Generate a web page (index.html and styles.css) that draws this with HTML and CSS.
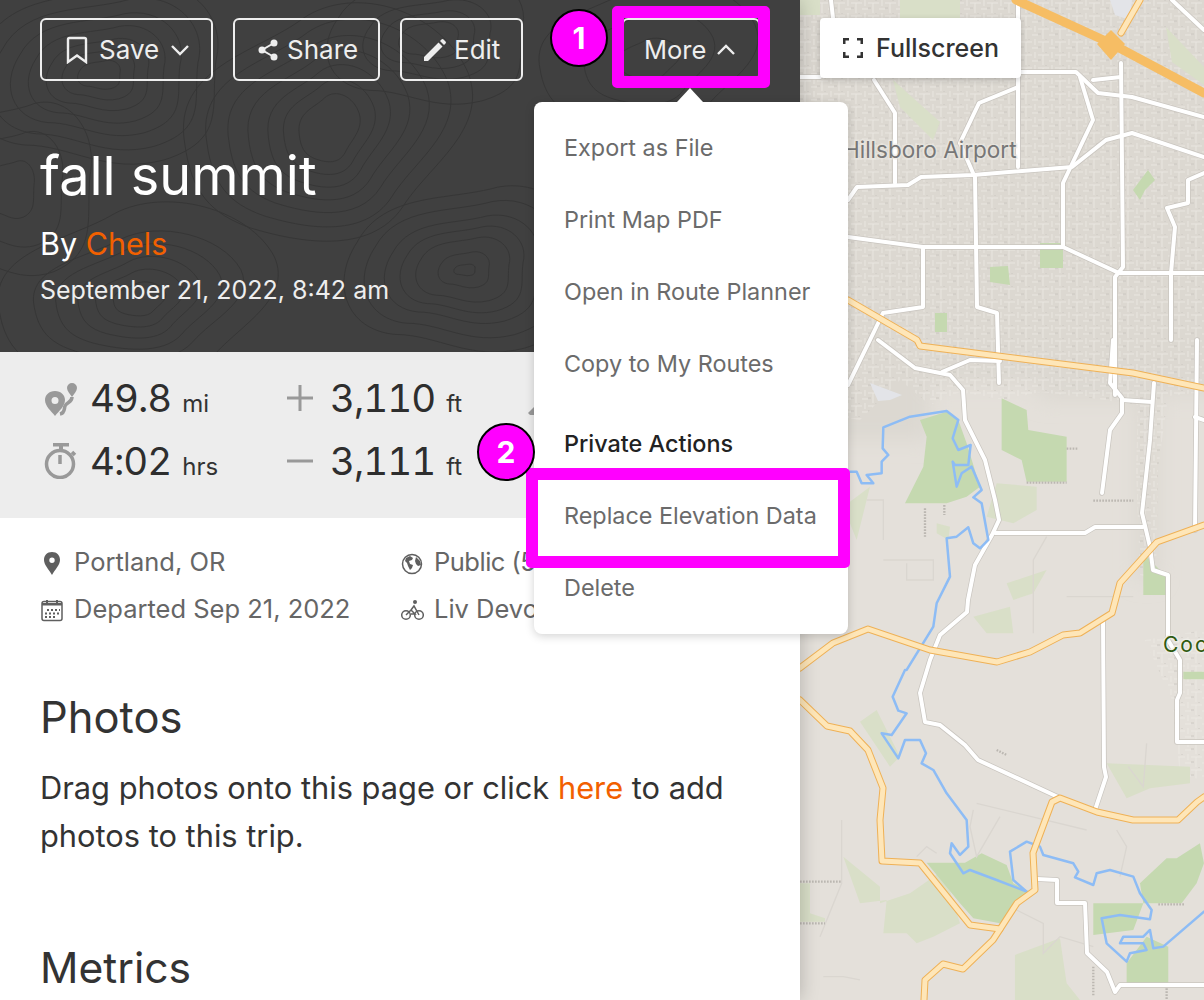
FILE: index.html
```html
<!DOCTYPE html>
<html lang="en">
<head>
<meta charset="utf-8">
<title>fall summit</title>
<link rel="stylesheet" href="styles.css">
</head>
<body>
<div class="page">
  <main class="panel">
    <header class="hero">
      <svg class="topo" viewBox="0 0 800 352" aria-hidden="true">
        <defs>
          <path class="contour" id="blob" d="M-40 -12C-30 -34 -6 -30 12 -36C30 -40 44 -24 40 -6C38 12 44 26 22 34C2 40 -10 28 -26 28C-44 26 -50 6 -40 -12Z"/>
          <path class="contour" id="blob2" d="M-44 4C-48 -18 -22 -22 -8 -32C8 -42 34 -34 42 -16C48 0 30 10 22 22C12 36 -10 32 -24 28C-36 24 -42 18 -44 4Z"/>
        </defs>
        <use href="#blob" transform="translate(100 75) scale(.5 .4)"/>
        <use href="#blob" transform="translate(100 75) scale(.85 .7)"/>
        <use href="#blob" transform="translate(100 75) scale(1.2 1)"/>
        <use href="#blob" transform="translate(100 75) scale(1.6 1.35)"/>
        <use href="#blob" transform="translate(100 75) scale(2 1.7)"/>
        <use href="#blob" transform="translate(100 75) scale(2.45 2.1)"/>
        <use href="#blob" transform="translate(100 75) scale(2.9 2.5)"/>
        <use href="#blob2" transform="translate(330 130) scale(.7 1)"/>
        <use href="#blob2" transform="translate(330 130) scale(1.05 1.4)"/>
        <use href="#blob2" transform="translate(330 130) scale(1.4 1.8)"/>
        <use href="#blob2" transform="translate(330 130) scale(1.85 2.2)"/>
        <use href="#blob2" transform="translate(330 130) scale(2.3 2.6)"/>
        <use href="#blob2" transform="translate(330 130) scale(2.8 3.05)"/>
        <use href="#blob2" transform="translate(330 130) scale(3.3 3.5)"/>
        <use href="#blob" transform="translate(465 270) scale(.25 .16)"/>
        <use href="#blob" transform="translate(465 270) scale(.6 .5)"/>
        <use href="#blob" transform="translate(465 270) scale(1.1 .9)"/>
        <use href="#blob" transform="translate(465 270) scale(1.45 1.2)"/>
        <use href="#blob" transform="translate(465 270) scale(1.8 1.5)"/>
        <use href="#blob" transform="translate(465 270) scale(2.25 1.9)"/>
        <use href="#blob" transform="translate(465 270) scale(2.7 2.3)"/>
        <use href="#blob2" transform="translate(140 300) scale(.6 .5)"/>
        <use href="#blob2" transform="translate(140 300) scale(1 .85)"/>
        <use href="#blob2" transform="translate(140 300) scale(1.4 1.2)"/>
        <use href="#blob2" transform="translate(140 300) scale(1.9 1.55)"/>
        <use href="#blob2" transform="translate(140 300) scale(2.4 1.9)"/>
        <use href="#blob2" transform="translate(140 300) scale(3.2 2.7)"/>
        <use href="#blob" transform="translate(430 40) scale(.7 .5)"/>
        <use href="#blob" transform="translate(430 40) scale(1.1 .8)"/>
        <use href="#blob" transform="translate(430 40) scale(1.5 1.1)"/>
        <use href="#blob" transform="translate(430 40) scale(2.3 1.8)"/>
        <use href="#blob2" transform="translate(650 60) scale(.7 .6)"/>
        <use href="#blob2" transform="translate(650 60) scale(1.5 1.4)"/>
        <use href="#blob2" transform="translate(650 60) scale(2.5 2.2)"/>
        <use href="#blob" transform="translate(10 190) scale(.6 .8)"/>
        <use href="#blob" transform="translate(10 190) scale(1.3 1.6)"/>
        <use href="#blob" transform="translate(10 190) scale(2 2.4)"/>
      </svg>
      <div class="actions">
        <button class="btn btn-save">
          <svg class="ico" width="22" height="28" viewBox="0 0 22 28"><path class="line" d="M2 26V3.500A1.500 1.500 0 0 1 3.500 2h15A1.500 1.500 0 0 1 20 3.500V26l-9-6.500z"/></svg>
          <span>Save</span>
          <svg class="ico" width="20" height="12" viewBox="0 0 20 12"><path class="line" d="M2 2l8 8 8-8"/></svg>
        </button>
        <button class="btn btn-share">
          <svg class="ico" width="20" height="22" viewBox="0 0 20 22"><path class="line thin" d="M16 4L4 11l12 7"/><circle class="solid" cx="16" cy="4" r="3.500"/><circle class="solid" cx="4" cy="11" r="3.500"/><circle class="solid" cx="16" cy="18" r="3.500"/></svg>
          <span>Share</span>
        </button>
        <button class="btn btn-edit">
          <svg class="ico" width="22" height="22" viewBox="0 0 22 22"><path class="solid" d="M0 22v-4L14.500 3.500l4 4L4 22zM16 2l1.500-1.500a1.500 1.500 0 0 1 2 0l2 2a1.500 1.500 0 0 1 0 2L20 6z"/></svg>
          <span>Edit</span>
        </button>
        <button class="btn btn-more">
          <span>More</span>
          <svg class="ico" width="20" height="12" viewBox="0 0 20 12"><path class="line" d="M2 10l8-8 8 8"/></svg>
        </button>
      </div>
      <h1 class="title">fall summit</h1>
      <p class="by">By <a class="link">Chels</a></p>
      <p class="date">September 21, 2022, 8:42 am</p>
    </header>

    <section class="stats">
      <div class="stat">
        <svg class="stat-ico" width="34" height="34" viewBox="0 0 34 34"><path class="gray" fill-rule="evenodd" d="M11 9c6 0 10 4 10 9 0 6-6 11-10 16C7 29 1 24 1 18c0-5 4-9 10-9zm0 6a3.500 3.500 0 1 0 0 7 3.500 3.500 0 0 0 0-7z"/><path class="gray" d="M28 1a5 5 0 0 1 5 5c0 3-3 6-5 9-2-3-5-6-5-9a5 5 0 0 1 5-5z"/><path class="gray-line" d="M28 15c0 6-6 5-7 9-1 3 0 7-5 8"/></svg>
        <span class="num">49.8</span><span class="unit">mi</span>
      </div>
      <div class="stat">
        <svg class="stat-ico" width="28" height="28" viewBox="0 0 28 28"><path class="gray" d="M12.500 1h3v11.500H27v3H15.500V27h-3V15.500H1v-3h11.500z"/></svg>
        <span class="num">3,110</span><span class="unit">ft</span>
      </div>
      <div class="stat">
        <svg class="stat-ico" width="34" height="36" viewBox="0 0 34 36"><path class="gray" d="M9 0h16v3.500H19V7h-4V3.500H9z"/><circle class="gray-line" cx="16" cy="21" r="13.500"/><path class="gray-line" d="M16 12v9M28 9l3 3"/></svg>
        <span class="num">4:02</span><span class="unit">hrs</span>
      </div>
      <div class="stat">
        <svg class="stat-ico" width="28" height="28" viewBox="0 0 28 28"><path class="gray" d="M1 12.500h26v3H1z"/></svg>
        <span class="num">3,111</span><span class="unit">ft</span>
      </div>
      <svg class="stat-peek" width="12" height="14" viewBox="0 0 12 14"><path class="gray" d="M0 11L10 1l2 2v10H2z"/></svg>
    </section>

    <section class="meta">
      <div class="meta-item">
        <svg class="meta-ico" width="24" height="24" viewBox="0 0 24 24"><path class="dark" fill-rule="evenodd" d="M12 1c5 0 8 3.500 8 8 0 5-5 9.500-8 15-3-5.500-8-10-8-15 0-4.500 3-8 8-8zm0 5.500a2.700 2.700 0 1 0 0 5.400 2.700 2.700 0 0 0 0-5.400z"/></svg>
        <span>Portland, OR</span>
      </div>
      <div class="meta-item meta-tight">
        <svg class="meta-ico" width="24" height="24" viewBox="0 0 24 24"><circle class="dark-line" cx="12" cy="13" r="9.500"/><path class="dark" d="M6 7l4-2 3 2-1 2-3 1 1 3 3 1-1 3-2 2-2-4-1-3-2-2zM16 6l4 4 1 4-3 1-2-2-1-3z"/></svg>
        <span>Public (5</span>
      </div>
      <div class="meta-item">
        <svg class="meta-ico" width="24" height="24" viewBox="0 0 24 24"><rect class="dark-line" x="2" y="3.500" width="20" height="19" rx="2"/><path class="dark" d="M2 5h20v2.500H2zM6 2h2v3H6zM16 2h2v3h-2zM7 11h2v2H7zM11 11h2v2h-2zM15 11h2v2h-2zM19 11h1v2h-1zM5 14.500h2v2H5zM9 14.500h2v2H9zM13 14.500h2v2h-2zM17 14.500h2v2h-2zM5 18h2v2H5zM9 18h2v2H9zM13 18h2v2h-2z"/></svg>
        <span>Departed Sep 21, 2022</span>
      </div>
      <div class="meta-item">
        <svg class="meta-ico" width="24" height="24" viewBox="0 0 24 24"><circle class="dark-line thin" cx="6" cy="17" r="4.300"/><circle class="dark-line thin" cx="19" cy="17" r="4.300"/><circle class="dark" cx="15" cy="4" r="2"/><path class="dark-line thin" d="M6 17l5-5 3-4 5 9M11 12l4 4h-4"/></svg>
        <span>Liv Devo</span>
      </div>
    </section>

    <section class="block block-photos">
      <h2 class="heading">Photos</h2>
      <p class="copy">Drag photos onto this page or click <a class="link">here</a> to add photos to this trip.</p>
    </section>
    <section class="block block-metrics">
      <h2 class="heading">Metrics</h2>
    </section>
  </main>

  <aside class="map">
    <svg class="map-art" width="404" height="1000" viewBox="0 0 404 1000" aria-hidden="true">
      <defs>
        <filter id="soft" x="-10%" y="-10%" width="120%" height="120%"><feGaussianBlur stdDeviation="10"/></filter>
        <pattern id="city" width="17" height="13" patternUnits="userSpaceOnUse">
          <path class="city-a" d="M0 3h11M5 3v10M11 9h6M14 0v6"/>
          <path class="city-b" d="M0 8h3M8 0v1"/>
        </pattern>
        <g id="white-roads">
          <polyline points="78,340 115,368 150,375 163,390 165,420 185,460 195,500 199,520 192,535 175,565 168,600 167,612 140,635 130,660 127,670 120,693 125,722 140,725 165,745 178,760 258,797"/>
          <polyline points="195,533 285,533 295,527 343,527"/>
          <polyline points="354,383 350,440 342,513 350,547 353,570 368,575 368,640 380,660 380,693 377,700 377,742 404,742"/>
          <polyline points="303,620 304,767 306,777 295,810"/>
          <polyline points="302,493 310,430 322,413 322,398 310,383 313,340"/>
          <polyline points="48,237 123,247 263,247 319,273 404,273"/>
          <polyline points="175,177 177,307 197,313 199,383"/>
          <polyline points="123,247 123,307 83,313 70,340 48,385"/>
          <polyline points="218,0 218,167"/>
          <polyline points="218,87 179,103 160,143 173,173"/>
          <polyline points="48,200 57,187 108,185 121,177 173,175 272,167 306,140 332,133 404,157"/>
          <polyline points="0,77 20,77"/>
          <polyline points="220,72 276,72 298,93 332,97 404,117"/>
          <polyline points="74,80 95,113 95,183"/>
          <polyline points="280,77 293,120 263,183 263,247"/>
          <polyline points="321,63 323,267 315,277 315,340 315,395"/>
          <polyline points="293,80 321,77"/>
          <polyline points="404,173 388,180 388,203 367,208 375,227 371,273 371,340"/>
          <polyline points="397,340 395,530"/>
          <polyline points="395,417 404,420"/>
          <polyline points="142,372 170,360 200,361"/>
          <polyline points="31,0 33,18"/>
          <polyline points="372,0 404,30"/>
          <polyline points="237,879 257,880 257,903 285,903 287,953 307,972 315,992 320,985 404,985"/>
          <polyline points="322,400 352,402"/>
        </g>
        <g id="yellow-roads">
          <polyline points="48,300 117,340 120,346 333,373 404,388"/>
          <polyline points="0,668 33,643 68,629 130,650 197,662 230,652 263,635 280,633 312,613 320,583 357,542 404,525"/>
          <polyline points="0,700 27,726 50,731 68,750 83,788 80,820 82,861 120,863 170,925 200,929"/>
          <polyline points="404,797 397,802 378,820 333,820 297,812 260,798 252,802 233,853 235,890 217,903 193,940 163,969 143,964 125,980 124,1000"/>
          <polyline points="340,0 321,33"/>
        </g>
      </defs>
      <rect class="land" width="404" height="1000"/>
      <path class="urban" d="M-20 -20H424V395H358V580H336V400H240V385H130V440H-20Z"/>
      <path class="city" d="M0 0H404V392L368 396 358 470 356 580 340 575 336 470 338 405 290 398 240 392 205 400 160 392 130 405 100 380 60 420 0 410Z"/>
      <path class="city" d="M345 640L404 630V780L380 775 372 700Z"/>
      <g transform="translate(0 340) scale(.3333)">
        <path class="park" d="M360 240L440 215 475 240 500 310 540 440 500 470 440 490H315L370 380 380 290Z"/>
        <path class="park" d="M605 175L680 210 685 270 800 290V425H680L665 360 605 330Z"/>
        <path class="park-light" d="M590 430L710 440V510L640 550 560 530ZM130 500L210 440 170 600ZM620 730L740 690 700 760 640 780ZM520 830L630 800 640 880 560 880ZM410 550L450 560 445 600 410 580Z"/>
        <path class="park" d="M1030 640L1100 710V765H1030Z"/>
        <path class="minor" d="M200 480H250V600M250 660H400V720H320V670M800 770H1000M700 880V660L740 590"/>
        <path class="rail" d="M680 428H800M880 482H1000M375 505V590M433 495V525M800 326H835"/>
      </g>
      <g transform="translate(0 670) scale(.3333)">
        <path class="park-light" d="M180 155L230 120 300 260 270 290ZM130 560L240 650V700L330 670 430 600 480 760 400 800 350 820 320 790H250L260 690 180 700ZM0 640H30V730L75 745V755H0ZM920 280L1170 290V340L1050 355 980 385ZM645 855L780 805 800 940 840 990H645Z"/>
        <path class="park" d="M380 578H495L545 550 620 585 640 640 690 665 650 700 600 760 520 745 480 700ZM1100 565L1130 565 1200 520 1212 580 1190 640 1145 700H1030L1020 640ZM880 700H1030L1000 780 880 795ZM980 880L1040 800 1105 830V940H980ZM1150 5H1212V28H1150Z"/>
        <path class="minor" d="M530 400L860 480M520 420L510 470 530 560 600 440M125 450V640L60 800M350 560L380 530 410 550M650 720L730 760V850L780 800 880 830M70 920H130L180 930M950 480L980 530 960 620M985 290L1030 350 1040 220"/>
        <path class="rail" d="M0 635H125M0 760H75M1075 703H1155M1100 955V990M880 890V980M590 240L620 255"/>
      </g>
      <path class="park" d="M240 243H263V268H240ZM190 267L208 266 210 285 190 282ZM135 313H147V332H135ZM355 180L345 190 340 200 333 190 348 170Z"/>
      <path class="park-light" d="M93 80L140 122 133 140 100 107ZM100 0H160V25H100ZM0 0H20V15H0ZM366 27L404 67V85L372 62Z"/>
      <path class="water-area" d="M70 383L102 395 90 400 78 401Z"/>
      <path class="water-area" d="M310 0H332L330 20 315 15Z"/>
      <g class="road-case"><use href="#white-roads"/></g>
      <g class="road-white"><use href="#white-roads"/></g>
      <g transform="translate(0 340) scale(.3333)">
        <polyline class="river" points="150,395 170,395 185,430 220,430 200,405 245,400 245,365 265,345 248,325 250,262 330,230 440,213 475,240 458,295 475,330 512,315 505,375 465,375 458,365 470,440 485,400 515,380 545,450 520,472 545,490 565,600 540,625 520,610 505,562 470,590 440,595 450,710 410,790 400,860 320,990"/>
      </g>
      <g transform="translate(0 670) scale(.3333)">
        <polyline class="river" points="315,0 278,80 295,122 320,130 275,195 245,190 295,265 315,210 360,210 378,250 365,280 400,300 440,370 500,450 505,530 480,555 455,520 450,550 490,610 510,600 590,630 680,665 640,630 630,545 680,515 720,530 730,555 820,580 835,605 825,622 880,645 890,610 930,600 1000,620 1020,670 1055,720 1050,748 960,735 905,745 920,820 980,875 990,850 1040,840 1030,820 960,820 970,800 1030,800 1050,780 1060,835 1090,830 1212,725"/>
      </g>
      <g class="hwy-case"><use href="#yellow-roads"/></g>
      <g class="hwy-fill"><use href="#yellow-roads"/></g>
      <polyline class="motorway" points="216,0 310,43 404,93"/>
      <path class="motorway-dot" d="M311 30L325 44 311 60 297 44Z"/>
      <text class="map-label" x="43" y="158">Hillsboro Airport</text>
      <text class="map-town" x="363" y="652">Coo</text>
    </svg>
    <button class="fullscreen">
      <svg class="ico-fs" width="20" height="20" viewBox="0 0 20 20"><path class="fs-line" d="M1 6V1h5M14 1h5v5M19 14v5h-5M6 19H1v-5"/></svg>
      <span>Fullscreen</span>
    </button>
  </aside>

  <nav class="menu">
    <a class="menu-item">Export as File</a>
    <a class="menu-item">Print Map PDF</a>
    <a class="menu-item">Open in Route Planner</a>
    <a class="menu-item">Copy to My Routes</a>
    <div class="menu-title">Private Actions</div>
    <a class="menu-item">Replace Elevation Data</a>
    <a class="menu-item">Delete</a>
  </nav>
  <div class="mark mark-more"></div>
  <div class="mark mark-replace"></div>
  <div class="badge badge-one">1</div>
  <div class="badge badge-two">2</div>
</div>
</body>
</html>
```
FILE: styles.css
```css
* { box-sizing: border-box; }
html, body { margin: 0; padding: 0; }
body { font-family: Inter, "Liberation Sans", sans-serif; color: #333; background: #fff; overflow: hidden; }
p, h1, h2 { margin: 0; font-weight: 400; }
button { font: inherit; background: none; }

.page { position: relative; display: flex; width: 1204px; height: 1000px; overflow: hidden; }
.panel { width: 800px; height: 1000px; flex: none; background: #fff; position: relative; z-index: 1; box-shadow: 0 0 18px rgba(0,0,0,.22); overflow: hidden; }
.hero { position: relative; height: 352px; background: #404040; padding: 18px 40px 0; color: #fff; }
.topo { position: absolute; inset: 0; width: 800px; height: 352px; }
.contour { fill: none; stroke: #363636; stroke-width: 1; vector-effect: non-scaling-stroke; }

.actions { position: relative; display: flex; gap: 20px; }
.btn { display: flex; align-items: center; height: 63px; border: 2px solid #eee; border-radius: 6px; color: #eee; font-size: 26px; padding: 0 22px; }
.btn-save { width: 173px; gap: 11px; padding-left: 24px; }
.btn-share { width: 147px; gap: 9px; padding-left: 23px; }
.btn-edit { width: 123px; gap: 8px; padding-left: 22px; }
.btn-more { width: 138px; gap: 10px; margin-left: 79px; padding-left: 20px; font-size: 25.500px; }
.ico { flex: none; }
.line { fill: none; stroke: #eee; stroke-width: 2.400; }
.line.thin { stroke-width: 2; }
.solid { fill: #eee; }

.title { position: relative; margin-top: 62px; font-size: 54px; line-height: 66px; color: #fff; }
.by { position: relative; margin-top: 16px; font-size: 30.500px; line-height: 38px; color: #fff; }
.date { position: relative; margin-top: 11px; font-size: 25px; line-height: 32px; color: #eee; }
.link { color: #f26000; }

.stats { height: 166px; background: #ededed; padding: 16px 40px 0; display: grid; grid-template-columns: 246px 246px 1fr; grid-auto-rows: 63px; }
.stat { display: flex; align-items: baseline; color: #2e2e2e; position: relative; padding-left: 50px; }
.stat:nth-child(even) { padding-left: 44px; }
.stat-ico { position: absolute; left: 4px; top: 14px; }
.stat:nth-child(even) .stat-ico { left: 0; top: 16px; }
.stat:nth-child(3) .stat-ico { left: 4px; top: 12px; }
.stat-peek { grid-column: 3; grid-row: 1; margin: 34px 0 0 -4px; }
.num { font-size: 38.500px; line-height: 60px; letter-spacing: -1px; font-variant-numeric: tabular-nums; }
.unit { font-size: 24px; margin-left: 11px; color: #333; }
.gray { fill: #999; }
.gray-line { fill: none; stroke: #999; stroke-width: 3.500; }

.meta { padding: 20px 40px 0; display: grid; grid-template-columns: 360px 300px; grid-auto-rows: 47px; font-size: 25.500px; color: #666; }
.meta-item { display: flex; align-items: center; gap: 10px; white-space: nowrap; }
.meta-tight { letter-spacing: -.5px; }
.meta-ico { flex: none; margin-top: 3px; }
.dark { fill: #5f5f5f; }
.dark-line { fill: none; stroke: #5f5f5f; stroke-width: 1.500; }

.block { padding: 0 40px; }
.heading { font-size: 43.500px; line-height: 52px; color: #333; }
.copy { margin-top: 21px; font-size: 30.800px; line-height: 48px; color: #333; width: 720px; }
.block-photos { margin-top: 59px; }
.block-metrics { margin-top: 82px; }
.block-metrics .heading { font-size: 42.600px; }

.map { position: relative; flex: 1; height: 1000px; overflow: hidden; background: #e4e0da; }
.map-art { display: block; }
.land { fill: #e4e0da; }
.urban { fill: #dcd8d1; filter: url(#soft); }
.city { fill: url(#city); opacity: .7; }
.city-a { fill: none; stroke: #eeebe6; stroke-width: 1; }
.city-b { fill: none; stroke: #c4c0b9; stroke-width: 1; }
.park { fill: #c5d9b0; }
.park-light { fill: #d9dfc8; }
.minor { fill: none; stroke: #dad6d0; stroke-width: 4; }
.rail { fill: none; stroke: #bbb7b1; stroke-width: 7; stroke-dasharray: 5 4; }
.water-area { fill: #e3e4e8; }
.road-case, .road-white, .hwy-case, .hwy-fill { fill: none; stroke-linejoin: round; stroke-linecap: round; }
.river, .motorway { fill: none; stroke-linejoin: round; stroke-linecap: round; }
.road-case { stroke: #c9c5bf; stroke-width: 5.500; }
.road-white { stroke: #fff; stroke-width: 4; }
.hwy-case { stroke: #efb156; stroke-width: 7; }
.hwy-fill { stroke: #fee6b8; stroke-width: 5; }
.river { stroke: #8dbcf5; stroke-width: 7.500; }
.motorway { stroke: #f6bd64; stroke-width: 9; }
.motorway-dot { fill: #f6bd64; }
.map-label { font-size: 22.500px; fill: #777; paint-order: stroke; stroke: rgba(235,232,226,.7); stroke-width: 3px; }
.map-town { font-size: 21px; fill: #2f5a10; letter-spacing: 2px; paint-order: stroke; stroke: rgba(240,240,235,.8); stroke-width: 3px; }

.fullscreen { position: absolute; left: 20px; top: 18px; width: 201px; height: 60px; display: flex; align-items: center; gap: 13px; padding: 0 0 0 23px; border: 0; border-radius: 4px; background: #fff; color: #333; font-size: 25px; font-weight: 450; box-shadow: 0 2px 6px rgba(0,0,0,.2); }
.fs-line { fill: none; stroke: #333; stroke-width: 3; }

.menu { position: absolute; z-index: 2; left: 534px; top: 102px; width: 314px; height: 532px; display: flex; flex-direction: column; padding: 10px 30px 0; background: #fff; border-radius: 8px; box-shadow: 0 2px 10px rgba(0,0,0,.18); font-size: 23.400px; }
.menu::before { content: ""; position: absolute; left: 143px; top: -14px; border: 13px solid transparent; border-top: 0; border-bottom: 14px solid #fff; }
.menu-item { height: 72px; display: flex; align-items: center; color: #6b6b6b; white-space: nowrap; padding-bottom: 2px; }
.menu-title { height: 72px; margin-top: 8px; display: flex; align-items: center; color: #222; font-weight: 450; padding-bottom: 2px; }

.mark { position: absolute; z-index: 3; border: 12px solid #ff00ff; border-radius: 5px; }
.mark-more { left: 612px; top: 6px; width: 158px; height: 82px; }
.mark-replace { left: 526px; top: 468px; width: 324px; height: 100px; }
.badge { position: absolute; z-index: 3; width: 58px; height: 58px; display: flex; align-items: center; justify-content: center; border: 2px solid #000; border-radius: 50%; background: #ff00ff; color: #fff; font-size: 30px; font-weight: 700; }
.badge-one { left: 550px; top: 9px; }
.badge-two { left: 477px; top: 423px; }
```
